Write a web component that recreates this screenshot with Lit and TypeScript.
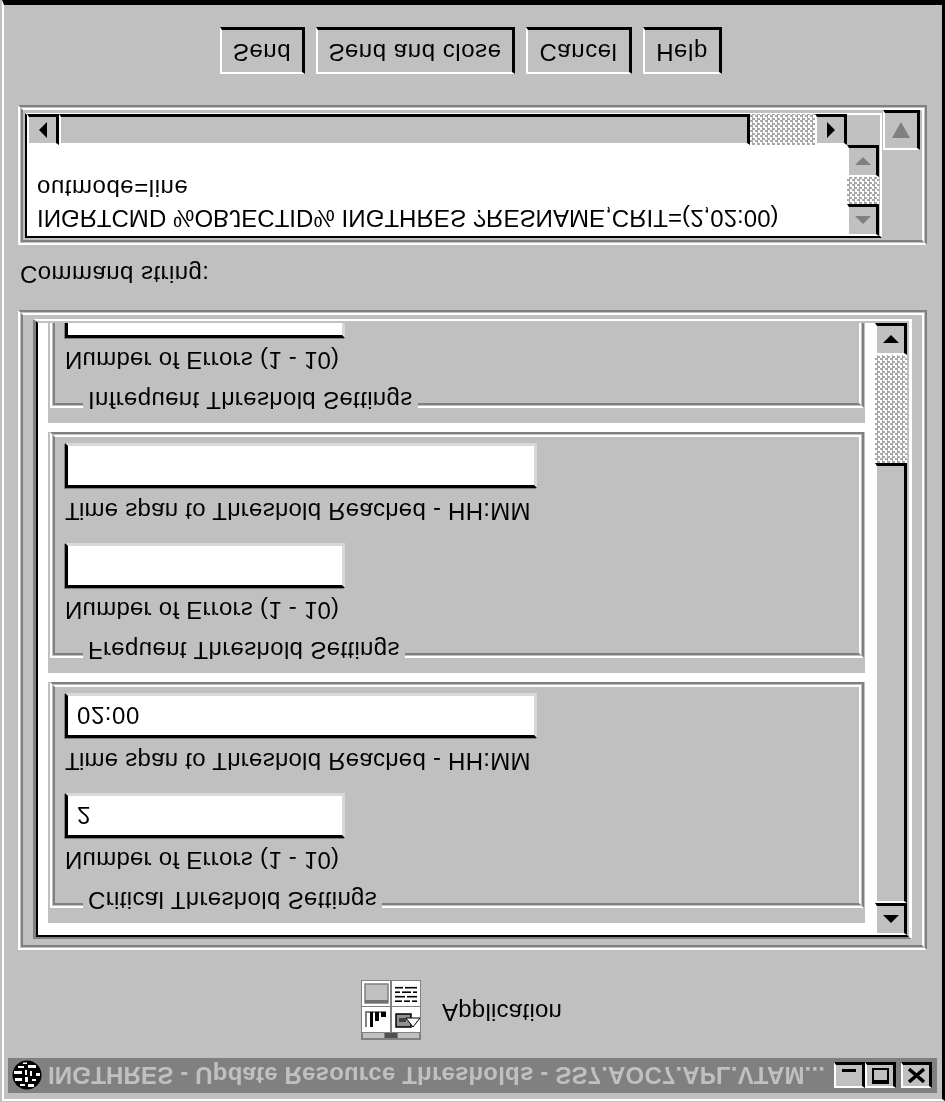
import { LitElement, html, css, svg, nothing } from "lit";
import { customElement } from "lit/decorators.js";

const tri = (dir: "up" | "down" | "left" | "right", cls = "") => {
  const pts = {
    up: "8,1 16,9 0,9",
    down: "0,1 16,1 8,9",
    left: "9,0 9,16 1,8",
    right: "1,0 1,16 9,8",
  }[dir];
  const box = dir === "up" || dir === "down" ? "0 0 16 10" : "0 0 10 16";
  const size = dir === "up" || dir === "down" ? [16, 10] : [10, 16];
  return html`<svg class="arrow ${cls}" width=${size[0]} height=${size[1]} viewBox=${box}>
    <polygon points=${pts}></polygon>
  </svg>`;
};

const appIcon = html`<svg class="appicon" width="60" height="60" viewBox="0 0 60 60">
  ${svg`
  <rect width="60" height="60" fill="#808080"/>
  <rect x="2" y="2" width="21" height="5" fill="#c0c0c0"/>
  <rect x="24" y="2" width="12" height="5" fill="#505050"/>
  <rect x="37" y="2" width="21" height="5" fill="#c0c0c0"/>
  <rect x="1" y="8" width="28" height="25" fill="#fff"/>
  <rect x="31" y="8" width="28" height="25" fill="#fff"/>
  <rect x="1" y="34" width="28" height="25" fill="#fff"/>
  <rect x="31" y="34" width="28" height="25" fill="#fff"/>
  <rect x="4" y="37" width="23" height="19" fill="#c0c0c0" stroke="#808080" stroke-width="1.5"/>
  <rect x="4" y="37" width="23" height="3" fill="#707070"/>
  <g fill="#000">
    <rect x="34" y="38" width="7" height="1.6"/><rect x="43" y="38" width="6" height="1.6"/><rect x="51" y="38" width="5" height="1.6"/>
    <rect x="34" y="42.5" width="10" height="1.6"/><rect x="46" y="42.5" width="10" height="1.6"/>
    <rect x="34" y="47" width="5" height="1.6"/><rect x="41" y="47" width="9" height="1.6"/><rect x="52" y="47" width="4" height="1.6"/>
    <rect x="34" y="51.5" width="8" height="1.6"/><rect x="44" y="51.5" width="12" height="1.6"/>
  </g>
  <rect x="4" y="13" width="2" height="16" fill="#808080"/>
  <rect x="4" y="27" width="21" height="2" fill="#808080"/>
  <rect x="9" y="13" width="3" height="15" fill="#000"/>
  <rect x="14" y="19" width="4" height="9" fill="#000"/>
  <rect x="20" y="23" width="5" height="5" fill="#000"/>
  <rect x="35" y="13" width="15" height="13" fill="#909090" stroke="#000" stroke-width="1.5"/>
  <polygon points="45,22 59,22 52,13" fill="#fff" stroke="#000" stroke-width="1"/>
  <rect x="38" y="18" width="7" height="4" fill="#404040"/>
  `}
</svg>`;

const globe = html`<svg class="globe" width="30" height="30" viewBox="0 0 30 30">
  ${svg`
  <circle cx="15" cy="15" r="14.5" fill="#000"/>
  <g fill="#fff">
    <rect x="8" y="4" width="5" height="2"/><rect x="16" y="3" width="6" height="3"/>
    <rect x="3" y="9" width="7" height="3"/><rect x="13" y="8" width="3" height="5"/><rect x="20" y="9" width="4" height="2"/>
    <rect x="2" y="16" width="8" height="3"/><rect x="13" y="15" width="2" height="5"/><rect x="18" y="14" width="2" height="5"/><rect x="24" y="14" width="4" height="3"/>
    <rect x="6" y="22" width="6" height="2"/><rect x="16" y="22" width="8" height="3"/><rect x="11" y="26" width="4" height="1.5"/>
  </g>
  `}
</svg>`;

@customElement("app-root")
export class AppRoot extends LitElement {
  static styles = css`
    :host {
      display: block;
      width: 945px;
      height: 1102px;
      background: #c0c0c0;
      transform: scaleY(-1);
      font-family: "Liberation Sans", Arial, sans-serif;
      font-size: 24px;
      color: #000;
      overflow: hidden;
      letter-spacing: 0.25px;
      filter: blur(0.45px);
    }
    * { box-sizing: border-box; }
    .win {
      width: 943px;
      height: 1101px;
      margin: 1px 0 0 2px;
      border-style: solid;
      border-width: 2px 3px 5px 2px;
      border-color: #fff #000 #000 #fff;
      padding: 6px 5px 0 4px;
      display: flex;
      flex-direction: column;
    }
    .title {
      height: 35px;
      flex: none;
      background: #808080;
      color: #c0c0c0;
      font-weight: 700;
      display: flex;
      align-items: center;
      padding: 0 5px 0 4px;
    }
    .title-text { margin-left: 6px; flex: 1; min-width: 0; white-space: nowrap; letter-spacing: 0.18px; }
    .globe { flex: none; }
    .wbtn {
      flex: none;
      width: 31px;
      height: 26px;
      padding: 0;
    }
    .wbtn.close { margin-left: 5px; }
    .wbtn svg { display: block; }
    .app {
      margin-top: 18px;
      height: 60px;
      flex: none;
      display: flex;
      align-items: center;
      padding-left: 353px;
    }
    .app-label { margin: 0 0 5px 21px; }
    .ridge {
      border: 2px solid;
      border-color: #fff #808080 #808080 #fff;
      padding: 1px;
    }
    .ridge-in {
      border: 2px solid;
      border-color: #808080 #fff #fff #808080;
      height: 100%;
    }
    .outer {
      margin: 30px 0 0 10px;
      width: 909px;
      height: 640px;
      flex: none;
    }
    .outer .ridge-in { padding: 6px 10px 4px 10px; }
    .sunken {
      height: 100%;
      border-style: solid;
      border-width: 2px 3px;
      border-color: #808080 #fff #fff #808080;
    }
    .sunken-in {
      height: 100%;
      border: 2px solid;
      border-color: #000 #c0c0c0 #c0c0c0 #000;
      display: flex;
    }
    .viewport {
      flex: none;
      width: 837px;
      height: 100%;
      background: #fff;
      overflow: hidden;
      padding: 12px 10px 0;
      display: flex;
      flex-direction: column;
      gap: 9px;
    }
    .block {
      flex: none;
      height: 241px;
      background: #c0c0c0;
      padding: 15px 1px 0 2px;
    }
    .frame { position: relative; height: 100%; }
    .frame .ridge-in { padding: 29px 0 0 10px; }
    .legend {
      position: absolute;
      top: -8px;
      left: 31px;
      height: 28px;
      line-height: 28px;
      padding: 0 5px;
      background: #c0c0c0;
      white-space: nowrap;
      letter-spacing: 0.35px;
    }
    .label { display: block; height: 28px; line-height: 28px; white-space: nowrap; }
    .field { display: block; height: 45px; margin-top: 8px; padding: 0 0 0 9px; background: #fff;
      border: 3px solid; border-color: #000 #d8d8d8 #d8d8d8 #000;
      box-shadow: -1px -1px 0 #808080;
      font: inherit; letter-spacing: 0.55px; color: #000; outline: none; border-radius: 0;
    }
    .field.n { width: 280px; }
    .field.t { width: 472px; margin-top: 9px; }
    .label.second { margin-top: 18px; }
    .vbar { flex: 1; display: flex; flex-direction: column; min-width: 0; }
    .raised {
      background: #c0c0c0;
      border-style: solid;
      border-width: 2px 3px 3px 2px;
      border-color: #fff #000 #000 #fff;
      display: flex;
      align-items: center;
      justify-content: center;
    }
    .sbtn { flex: none; height: 32px; padding: 0; }
    .thumb { flex: none; height: 440px; }
    .dither {
      background-color: #fff;
      background-image: conic-gradient(#a8a8a8 25%, #fff 0 50%, #a8a8a8 0 75%, #fff 0);
      background-size: 5px 5px;
    }
    .track { flex: 1; }
    .arrow polygon { fill: #000; }
    .arrow.dim polygon { fill: #808080; }
    .cmd-label { margin: 22px 0 0 12px; height: 28px; line-height: 28px; flex: none; letter-spacing: 0.45px; }
    .cmd {
      margin: 15px 0 0 10px;
      width: 909px;
      height: 140px;
      flex: none;
    }
    .cmd .ridge-in { padding: 2px 0 0 2px; display: flex; }
    .cmd-box {
      width: 857px;
      flex: none;
      height: 125px;
      border: 2px solid;
      border-color: #000 #fff #fff #000;
      display: grid;
      grid-template-columns: 820px 32px;
      grid-template-rows: 91px 31px;
    }
    .text {
      background: #fff;
      padding: 2px 0 0 10px;
      overflow: hidden;
      white-space: nowrap;
    }
    .text div { line-height: 32px; }
    .text .l1 { height: 30px; letter-spacing: 0.05px; }
    .text .l2 { height: 32px; letter-spacing: 0.55px; }
    .hbar { display: flex; grid-column: 1; grid-row: 2; }
    .hbar .hb { flex: none; width: 32px; padding: 0; }
    .hbar .hthumb { flex: none; width: 691px; }
    .corner-sb { display: flex; flex-direction: column; grid-column: 2; grid-row: 1; }
    .drop {
      flex: none;
      margin-left: 1px;
      width: 37px;
      height: 40px;
      padding: 0;
      align-self: flex-end;
    }
    .drop svg { display: block; }
    .buttons {
      margin-top: 31px;
      padding-left: 212px;
      display: flex;
      gap: 11px;
      height: 47px;
      flex: none;
    }
    .btn {
      padding: 0;
      height: 47px;
      font: inherit;
      letter-spacing: 0.55px;
      color: #000;
    }
    .btn span { position: relative; top: -1px; }
    .b-send { width: 85px; }
    .b-close { width: 199px; }
    .b-cancel { width: 106px; }
    .b-help { width: 79px; }
  `;

  /* The last group is scrolled out of view past its first field, so only that part is rendered. */
  private block(legend: string, errors: string, span: string, clipped = false) {
    return html`<div class="block">
      <div class="frame ridge">
        <div class="ridge-in">
          <span class="label">Number of Errors (1 - 10)</span>
          <input class="field n" readonly .value=${errors} />
          ${clipped
            ? nothing
            : html`<span class="label second">Time span to Threshold Reached - HH:MM</span>
                <input class="field t" readonly .value=${span} />`}
        </div>
        <div class="legend">${legend}</div>
      </div>
    </div>`;
  }

  render() {
    return html`<div class="win">
      <div class="title">
        ${globe}
        <div class="title-text">INGTHRES - Update Resource Thresholds - SS7.AOC7.APL.VTAM...</div>
        <div class="wbtn raised"><svg width="14" height="20" viewBox="0 0 14 20"><rect x="0" y="14" width="14" height="3"></rect></svg></div>
        <div class="wbtn raised"><svg width="17" height="16" viewBox="0 0 17 16"><rect x="1" y="2" width="15" height="13" fill="none" stroke="#000" stroke-width="2"></rect><rect x="0" y="0" width="17" height="4"></rect></svg></div>
        <div class="wbtn raised close"><svg width="17" height="15" viewBox="0 0 17 15"><path d="M1 1 L16 14 M16 1 L1 14" stroke="#000" stroke-width="3.4" fill="none"></path></svg></div>
      </div>

      <div class="app">${appIcon}<span class="app-label">Application</span></div>

      <div class="outer ridge">
        <div class="ridge-in">
          <div class="sunken">
            <div class="sunken-in">
              <div class="viewport">
                ${this.block("Critical Threshold Settings", "2", "02:00")}
                ${this.block("Frequent Threshold Settings", "", "")}
                ${this.block("Infrequent Threshold Settings", "", "", true)}
              </div>
              <div class="vbar">
                <div class="sbtn raised">${tri("up")}</div>
                <div class="thumb raised"></div>
                <div class="track dither"></div>
                <div class="sbtn raised">${tri("down")}</div>
              </div>
            </div>
          </div>
        </div>
      </div>

      <div class="cmd-label">Command string:</div>

      <div class="cmd ridge">
        <div class="ridge-in">
          <div class="cmd-box">
            <div class="text">
              <div class="l1">INGRTCMD %OBJECTID% INGTHRES ?RESNAME,CRIT=(2,02:00)</div>
              <div class="l2">outmode=line</div>
            </div>
            <div class="corner-sb">
              <div class="sbtn raised">${tri("up", "dim")}</div>
              <div class="track dither"></div>
              <div class="sbtn raised">${tri("down", "dim")}</div>
            </div>
            <div class="hbar">
              <div class="hb raised">${tri("left")}</div>
              <div class="hthumb raised"></div>
              <div class="track dither"></div>
              <div class="hb raised">${tri("right")}</div>
            </div>
          </div>
          <div class="drop raised">
            <svg width="18" height="18" viewBox="0 0 18 18"><polygon points="0,1 18,1 9,17" fill="#808080"></polygon></svg>
          </div>
        </div>
      </div>

      <div class="buttons">
        <button class="btn raised b-send"><span>Send</span></button>
        <button class="btn raised b-close"><span>Send and close</span></button>
        <button class="btn raised b-cancel"><span>Cancel</span></button>
        <button class="btn raised b-help"><span>Help</span></button>
      </div>
    </div>`;
  }
}
